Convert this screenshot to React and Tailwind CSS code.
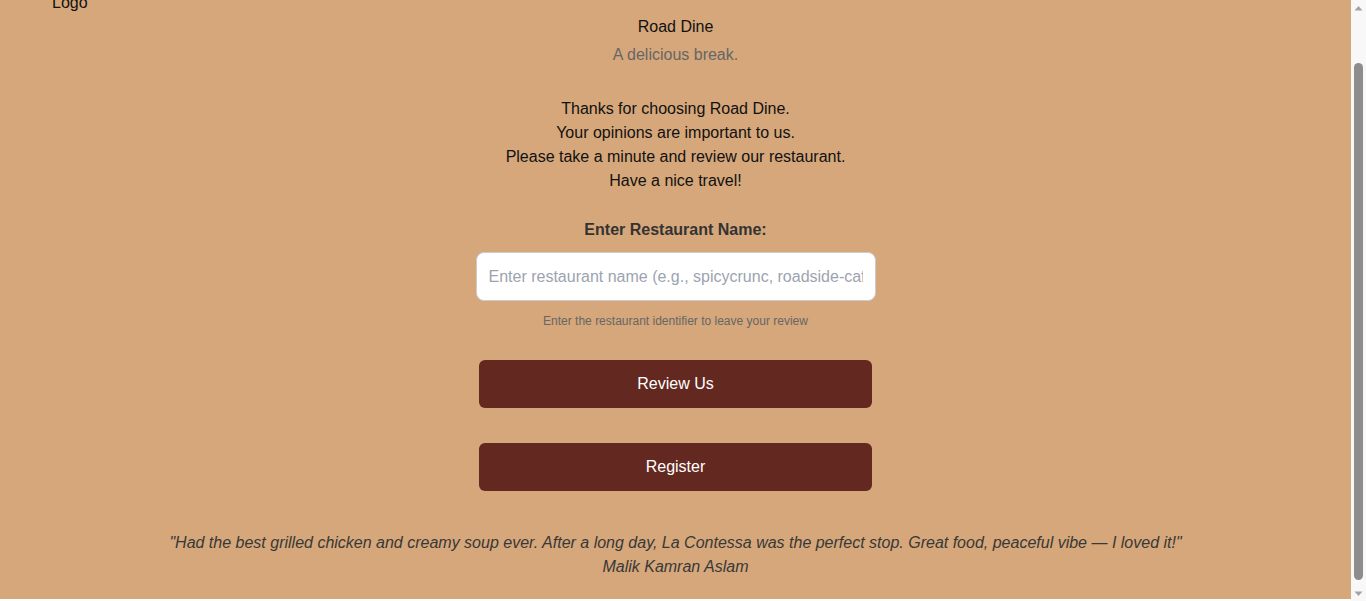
import React, { useLayoutEffect, useRef } from "react";

function ScrollRail() {
  return (
    <div className="w-[15px] shrink-0 h-screen bg-[#f8f8f8] flex flex-col">
      <div className="h-[15px] flex items-center justify-center">
        <svg width="9" height="6" viewBox="0 0 9 6">
          <path d="M0.5 5.5 L4.5 1 L8.5 5.5 Z" fill="#a3a3a3" />
        </svg>
      </div>
      <div className="flex-1 flex flex-col pt-[48px] pb-[6px] px-[3px]">
        <div className="flex-1 rounded-full bg-[#8d8d8d]"></div>
      </div>
      <div className="h-[15px] flex items-center justify-center">
        <svg width="9" height="6" viewBox="0 0 9 6">
          <path d="M0.5 0.5 L4.5 5 L8.5 0.5 Z" fill="#a3a3a3" />
        </svg>
      </div>
    </div>
  );
}

export default function App() {
  const ref = useRef(null);
  useLayoutEffect(() => {
    if (ref.current) ref.current.scrollTop = 56;
  }, []);

  return (
    <div className="flex h-screen overflow-hidden font-['Liberation_Sans',Arial,sans-serif] text-[16px]">
      <div ref={ref} className="flex-1 h-screen overflow-hidden bg-[#f5efdc]">
        <div className="bg-[#d6a77a] pb-[20px] flex flex-col">
          <header className="pt-[50px] pl-[52px] leading-[18px] text-[#111]">Logo</header>
          <main className="pt-[1px] flex flex-col items-center text-center">
            <h1 className="leading-[28px] text-[#111] font-normal">Road Dine</h1>
            <p className="leading-[28px] text-[#666]">A delicious break.</p>
            <div className="mt-[28px] leading-[24px] text-[#111]">
              <p>Thanks for choosing Road Dine.</p>
              <p>Your opinions are important to us.</p>
              <p>Please take a minute and review our restaurant.</p>
              <p>Have a nice travel!</p>
            </div>
            <label className="mt-[28px] leading-[18px] font-bold text-[#333]">
              Enter Restaurant Name:
            </label>
            <input
              type="text"
              placeholder="Enter restaurant name (e.g., spicycrunc, roadside-cafe)"
              className="mt-[13px] w-[400px] h-[49px] px-[12px] bg-white border border-[#cccccc] rounded-lg text-[16px] text-[#333] placeholder:text-[#9ca3af] outline-none"
            />
            <p className="mt-[13px] text-[12px] leading-[14px] text-[#666]">
              Enter the restaurant identifier to leave your review
            </p>
            <button className="mt-[32px] w-[393px] h-[48px] rounded-md bg-[#632820] text-white text-[16px]">
              Review Us
            </button>
            <button className="mt-[35px] w-[393px] h-[48px] rounded-md bg-[#632820] text-white text-[16px]">
              Register
            </button>
            <div className="mt-[40px] leading-[24px] italic text-[#383838]">
              <p>"Had the best grilled chicken and creamy soup ever. After a long day, La Contessa was the perfect stop. Great food, peaceful vibe — I loved it!"</p>
              <p>Malik Kamran Aslam</p>
            </div>
          </main>
        </div>
        <div className="h-[10px]"></div>
      </div>
      <ScrollRail />
    </div>
  );
}
